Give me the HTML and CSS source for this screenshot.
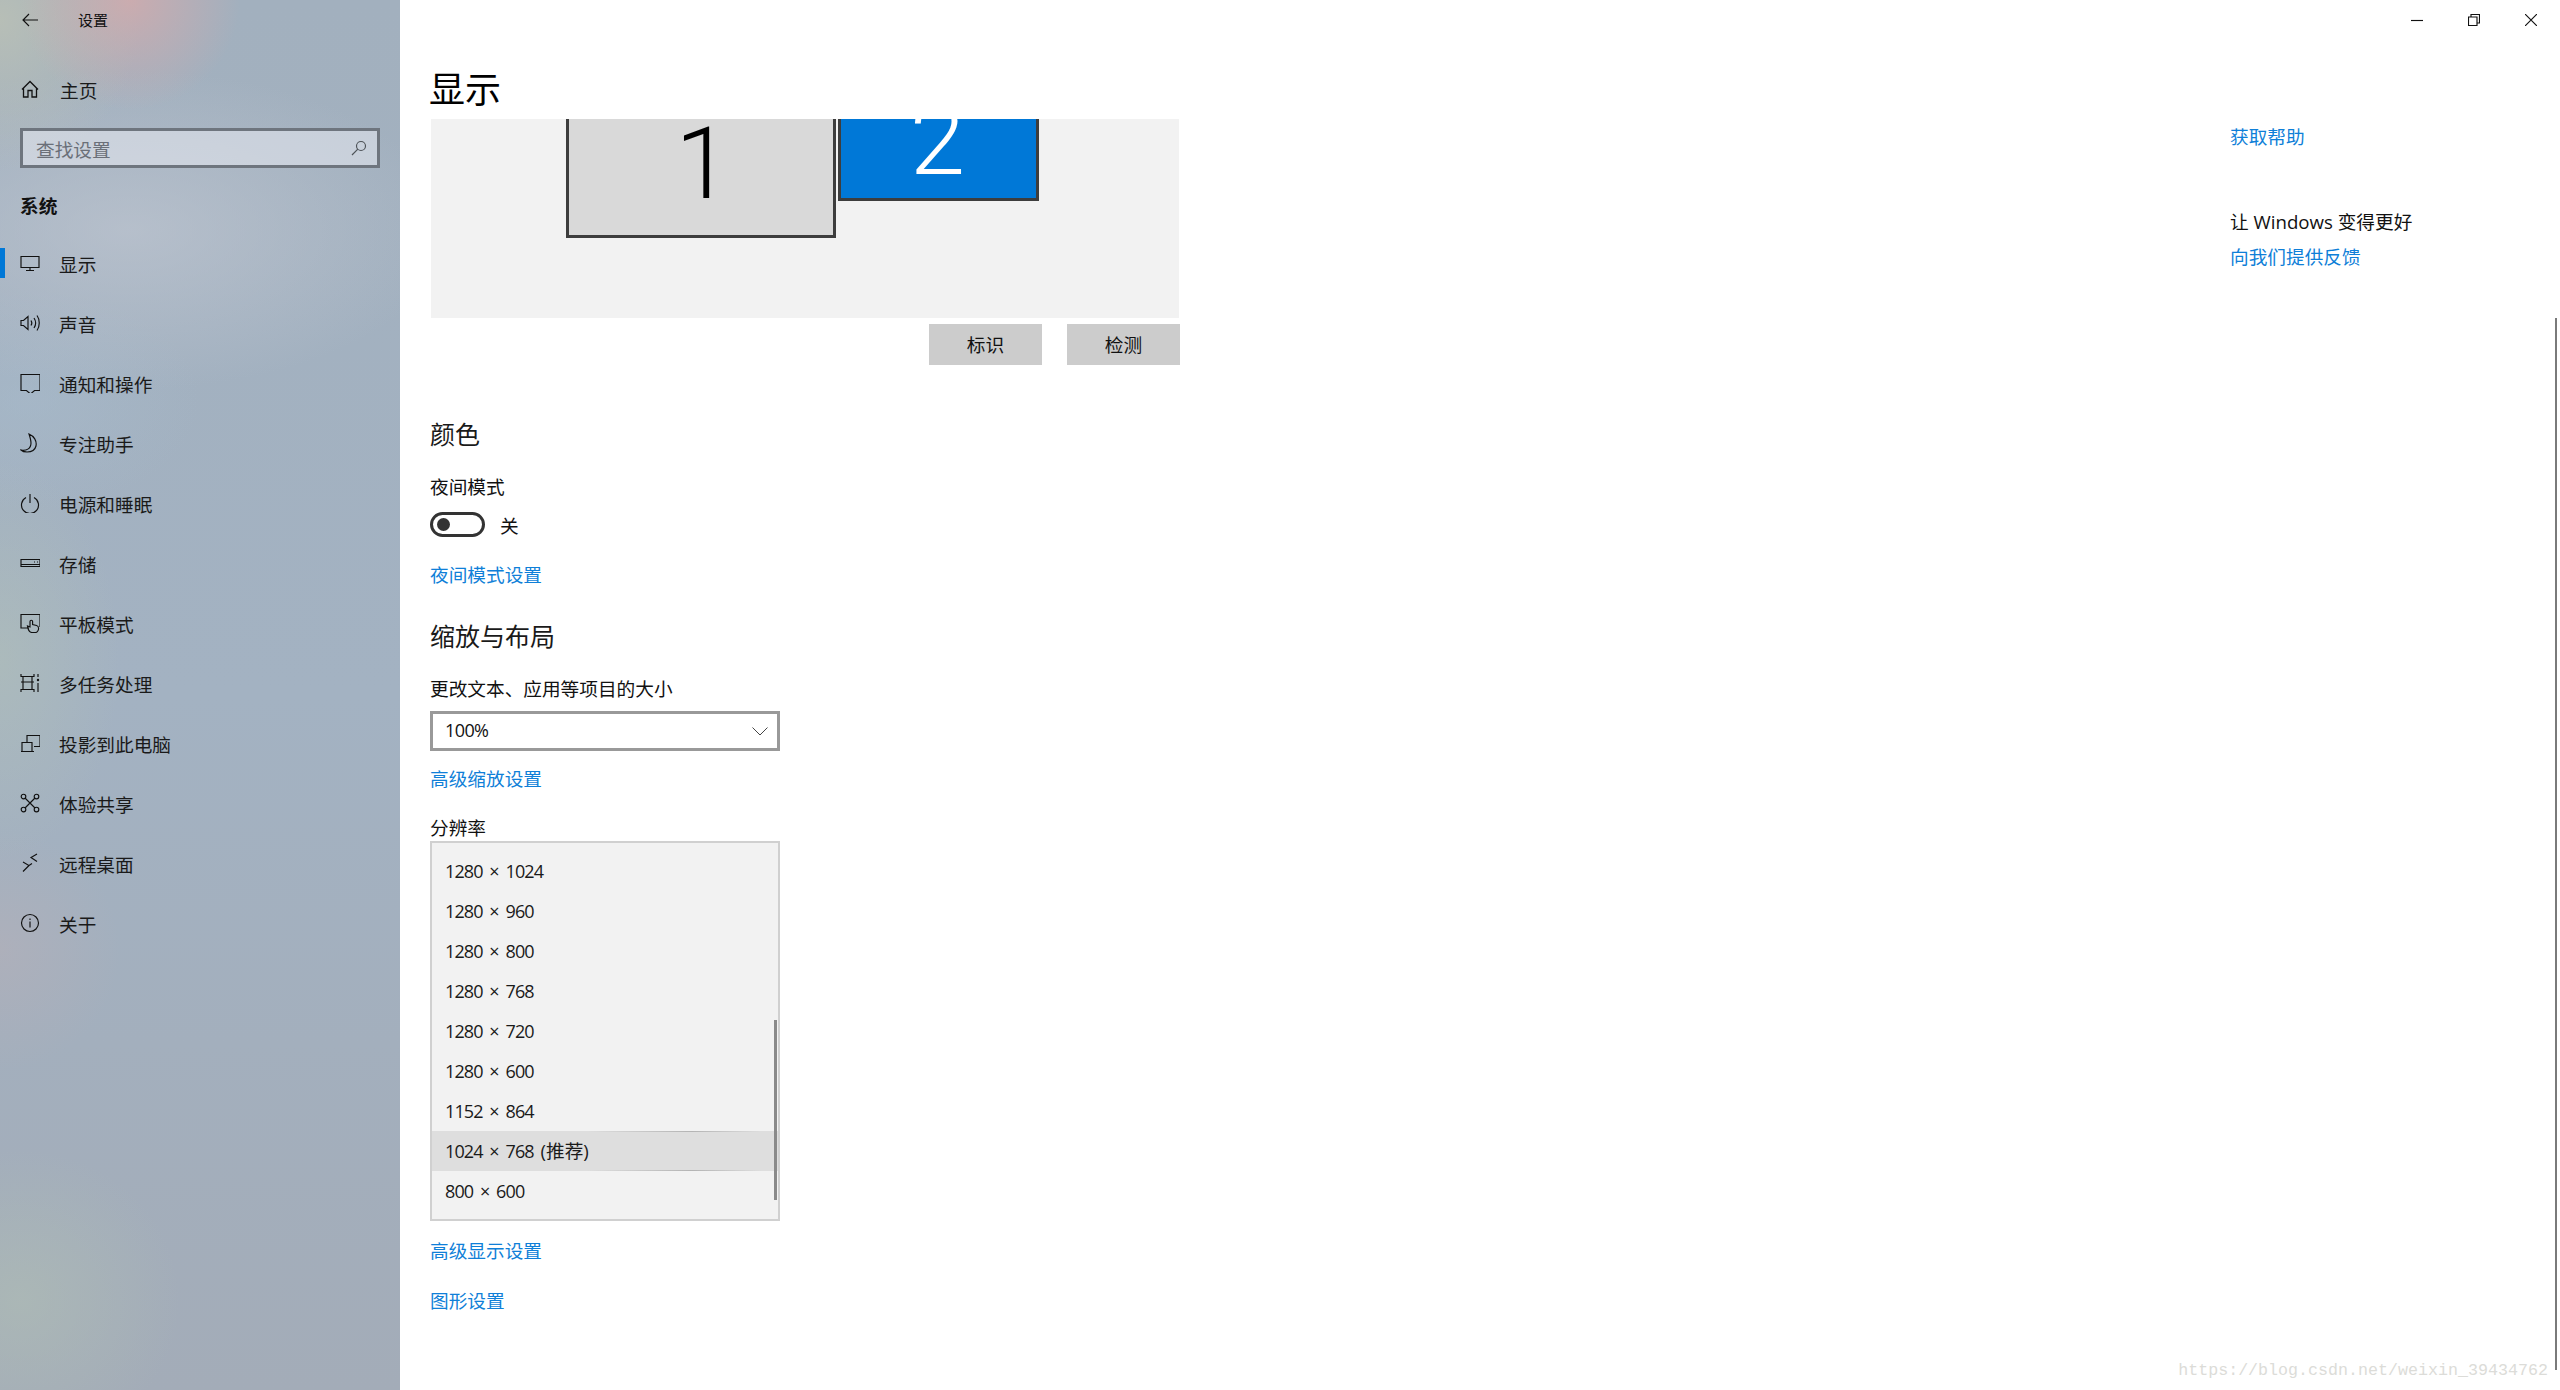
FILE: index.html
```html
<!DOCTYPE html>
<html lang="zh-CN">

<head>
    <meta charset="UTF-8">
    <title>设置</title>
    <link rel="stylesheet" href="styles.css">
</head>

<body>
    <div class="app">
        <aside class="sidebar">
            <div class="titlebar">
                <svg class="back-icon" width="16" height="14" viewBox="0 0 16 14"><path d="M7 1 1 7l6 6M1 7h15"/></svg>
                <span class="app-name">设置</span>
            </div>
            <a class="nav-home">
                <svg class="icon" width="20" height="20" viewBox="0 0 20 20"><path d="M2 10.5 10 2.5l8 8M3.5 9v9h4.500v-6.500h4V18h4.500V9"/></svg>
                <span>主页</span>
            </a>
            <div class="search">
                <span class="search-text">查找设置</span>
                <svg class="search-icon" width="16" height="16" viewBox="0 0 16 16"><circle cx="10" cy="6" r="4.500"/><path d="M6.800 9.200 1 15"/></svg>
            </div>
            <div class="nav-group">系统</div>
            <nav class="nav-list">
                <a class="nav-item active">
                    <svg class="icon" width="20" height="20" viewBox="0 0 20 20"><path d="M1 3.500h18v11H1zM10 14.500v3M6 17.500h8"/></svg>
                    <span>显示</span>
                </a>
                <a class="nav-item">
                    <svg class="icon" width="20" height="20" viewBox="0 0 20 20"><path d="M1 7.500h2.500L8 3.500v13l-4.500-4H1zM11 7.500c1 1.500 1 3.500 0 5M14 5c2 3 2 7 0 10M17 2.500c3 4 3 11 0 15"/></svg>
                    <span>声音</span>
                </a>
                <a class="nav-item">
                    <svg class="icon" width="20" height="20" viewBox="0 0 20 20"><path d="M1 1.500h19v16h-5.500l-4 3.500-4-3.500H1z"/></svg>
                    <span>通知和操作</span>
                </a>
                <a class="nav-item">
                    <svg class="icon" width="20" height="20" viewBox="0 0 20 20"><path d="M9 1c5 2 8 7 7 12-1 4-5 6-9 6-2.500 0-5-1-6-2 5 1 10-1 10-7 0-3-1-6-2-9z"/></svg>
                    <span>专注助手</span>
                </a>
                <a class="nav-item">
                    <svg class="icon" width="20" height="20" viewBox="0 0 20 20"><path d="M6 4.500a8.500 8.500 0 1 0 8 0M10 1v9"/></svg>
                    <span>电源和睡眠</span>
                </a>
                <a class="nav-item">
                    <svg class="icon" width="20" height="20" viewBox="0 0 20 20"><path d="M1 6.500h19v7H1zM1 11.500h19M14 9h1M17 9h1"/></svg>
                    <span>存储</span>
                </a>
                <a class="nav-item">
                    <svg class="icon" width="20" height="20" viewBox="0 0 20 20"><path d="M9 15H1V1.500h19V14M12 19.500c-2 0-3-1-4-4l-.5-2.500 2.500 1V8.500a1.300 1.300 0 0 1 2.600 0v3l4 1c2 .5 2 2 2 3 0 2-1.500 4-3 4z"/></svg>
                    <span>平板模式</span>
                </a>
                <a class="nav-item">
                    <svg class="icon" width="20" height="20" viewBox="0 0 20 20"><path d="M1 1v2.500h13V1M3 3.500v13M12 3.500v13M1 19v-2.500h13V19M1 9h13M18 1v3M18 10v9"/><circle class="dot" cx="18" cy="7" r="1.200"/></svg>
                    <span>多任务处理</span>
                </a>
                <a class="nav-item">
                    <svg class="icon" width="20" height="20" viewBox="0 0 20 20"><path d="M7 9V2.500h13v11h-6M1 18.500h13M2 18V9.500h10V18"/></svg>
                    <span>投影到此电脑</span>
                </a>
                <a class="nav-item">
                    <svg class="icon" width="20" height="20" viewBox="0 0 20 20"><circle cx="3.500" cy="3.500" r="2.300"/><circle cx="16.500" cy="3.500" r="2.300"/><circle cx="3.500" cy="16.500" r="2.300"/><circle cx="16.500" cy="16.500" r="2.300"/><path d="M5 5l10 10M15 5 5 15"/></svg>
                    <span>体验共享</span>
                </a>
                <a class="nav-item">
                    <svg class="icon" width="20" height="20" viewBox="0 0 20 20"><path d="M3 9l6 3.500-6 6M17 1l-6 3.500 6 4M9 12.500l3-2"/></svg>
                    <span>远程桌面</span>
                </a>
                <a class="nav-item">
                    <svg class="icon" width="20" height="20" viewBox="0 0 20 20"><circle cx="10" cy="10" r="8.500"/><path d="M10 8.500v6M10 5.500v1.500"/></svg>
                    <span>关于</span>
                </a>
            </nav>
        </aside>

        <main class="content">
            <div class="window-controls">
                <svg width="12" height="12" viewBox="0 0 12 12"><path d="M0 6.500h12"/></svg>
                <svg width="12" height="12" viewBox="0 0 12 12"><path d="M.5 3h8.500v8.500H.5zM3 3V.5h8.500V9H9"/></svg>
                <svg width="12" height="12" viewBox="0 0 12 12"><path d="m0 0 12 12M12 0 0 12"/></svg>
            </div>
            <div class="columns">
                <section class="settings">
                    <h1 class="page-title">显示</h1>

                    <div class="monitors">
                        <div class="monitor-row">
                            <div class="monitor monitor-one"><span>1</span></div>
                            <div class="monitor monitor-two"><span>2</span></div>
                        </div>
                    </div>
                    <div class="monitor-actions">
                        <button class="btn">标识</button>
                        <button class="btn">检测</button>
                    </div>

                    <h2 class="section-title title-color">颜色</h2>
                    <div class="label label-night">夜间模式</div>
                    <div class="toggle-row">
                        <span class="toggle"></span>
                        <span>关</span>
                    </div>
                    <a class="link link-night">夜间模式设置</a>

                    <h2 class="section-title title-scale">缩放与布局</h2>
                    <div class="label label-size">更改文本、应用等项目的大小</div>
                    <div class="select">
                        <span class="select-value">100%</span>
                        <svg width="16" height="9" viewBox="0 0 16 9"><path d="m.5.500 7.500 7.500L15.500.500"/></svg>
                    </div>
                    <a class="link link-scale">高级缩放设置</a>

                    <div class="label label-res">分辨率</div>
                    <div class="res-list">
                        <div class="res-item">1280 × 1024</div>
                        <div class="res-item">1280 × 960</div>
                        <div class="res-item">1280 × 800</div>
                        <div class="res-item">1280 × 768</div>
                        <div class="res-item">1280 × 720</div>
                        <div class="res-item">1280 × 600</div>
                        <div class="res-item">1152 × 864</div>
                        <div class="res-item selected"><span class="res-text">1024 × 768 <span class="res-note">(推荐)</span></span></div>
                        <div class="res-item">800 × 600</div>
                        <span class="res-scroll"></span>
                    </div>
                    <a class="link link-display">高级显示设置</a>
                    <a class="link link-graphics">图形设置</a>
                </section>

                <section class="help">
                    <a class="link">获取帮助</a>
                    <div class="help-title">让 Windows 变得更好</div>
                    <a class="link">向我们提供反馈</a>
                </section>
            </div>
            <span class="page-scroll"></span>
            <span class="watermark">https://blog.csdn.net/weixin_39434762</span>
        </main>
    </div>
</body>

</html>
```

FILE: styles.css
```css
* {
    margin: 0;
    padding: 0;
    box-sizing: border-box;
}

html,
body {
    height: 100%;
    overflow: hidden;
}

body {
    font-family: "Open Sans", "Noto Sans CJK SC", sans-serif;
    font-size: 18.67px;
    color: #111;
    background-color: #fff;
}

.app {
    display: flex;
    height: 1390px;
}

/* sidebar */

.sidebar {
    width: 400px;
    flex-shrink: 0;
    background-image:
        radial-gradient(circle 110px at 130px 0, rgba(216, 170, 170, 0.75), rgba(216, 170, 170, 0)),
        radial-gradient(ellipse 140px 150px at 0 20px, rgba(190, 195, 180, 0.75), rgba(190, 195, 180, 0)),
        radial-gradient(ellipse 320px 160px at 130px 230px, rgba(190, 197, 208, 0.7), rgba(190, 197, 208, 0)),
        radial-gradient(ellipse 170px 110px at 30px 400px, rgba(168, 188, 205, 0.5), rgba(168, 188, 205, 0)),
        radial-gradient(ellipse 120px 200px at 0 660px, rgba(182, 196, 180, 0.45), rgba(182, 196, 180, 0)),
        radial-gradient(ellipse 120px 120px at 0 950px, rgba(186, 176, 182, 0.45), rgba(186, 176, 182, 0)),
        radial-gradient(ellipse 160px 150px at 20px 1300px, rgba(176, 190, 180, 0.6), rgba(176, 190, 180, 0)),
        linear-gradient(180deg, #a2b0be, #a3b2c2 50%, #a3acb8);
}

.sidebar a {
    color: #1a1a1a;
}

.sidebar svg,
.window-controls svg {
    fill: none;
    stroke: #111;
    stroke-width: 1.15;
    flex-shrink: 0;
}

.select svg {
    fill: none;
    stroke: #444;
    stroke-width: 1;
    flex-shrink: 0;
}

.sidebar svg .dot {
    fill: #111;
    stroke: none;
}

.titlebar {
    display: flex;
    align-items: center;
    height: 40px;
    padding-left: 22px;
}

.app-name {
    font-size: 15px;
    margin-left: 40px;
    padding-bottom: 2px;
}

.nav-home {
    display: flex;
    align-items: center;
    gap: 20px;
    height: 24px;
    margin-top: 37px;
    padding-left: 20px;
}

.nav-home .icon {
    stroke-width: 1.3;
}

.search {
    display: flex;
    align-items: center;
    justify-content: space-between;
    width: 360px;
    height: 40px;
    margin: 27px 0 0 20px;
    padding: 0 10px 0 13px;
    border: 3px solid #6e757e;
    background-color: rgba(225, 229, 236, 0.6);
}

.search-text {
    color: #6a6f78;
}

.search-icon {
    stroke: #4d5257 !important;
}

.nav-group {
    font-weight: 700;
    margin: 25px 0 0 20px;
    height: 26px;
    line-height: 26px;
}

.nav-list {
    display: flex;
    flex-direction: column;
    margin-top: 14px;
}

.nav-item {
    display: flex;
    align-items: center;
    gap: 19px;
    height: 60px;
    padding-left: 20px;
    position: relative;
}

.nav-item.active::before {
    content: "";
    position: absolute;
    left: 0;
    top: 15px;
    width: 5px;
    height: 30px;
    background-color: #0078d7;
}

/* main area */

.content {
    flex: 1;
    position: relative;
    padding-left: 30px;
}

.window-controls {
    display: flex;
    justify-content: flex-end;
    gap: 45px;
    height: 40px;
    padding: 14px 23px 0 0;
}

.columns {
    display: flex;
    justify-content: space-between;
}

.settings {
    display: flex;
    flex-direction: column;
    align-items: flex-start;
    width: 750px;
}

.page-title {
    font-size: 36px;
    font-weight: 400;
    line-height: 50px;
    margin-top: 25px;
    height: 54px;
    margin-left: -1px;
    color: #000;
}

.monitors {
    width: 748px;
    height: 199px;
    margin-left: 1px;
    background-color: #f2f2f2;
    overflow: hidden;
}

.monitor-row {
    display: flex;
    gap: 2px;
    align-items: flex-start;
    margin-left: 135px;
}

.monitor {
    display: flex;
    justify-content: center;
    align-items: flex-end;
    border: 3px solid #3d3d3d;
    border-top: 0;
    font-family: "Roboto", sans-serif;
    font-weight: 300;
    font-size: 100px;
    line-height: 0.8;
}

.monitor-one {
    width: 270px;
    height: 119px;
    padding: 0 0 31px 4px;
    background-color: #d9d9d9;
    color: #000;
}

.monitor-two {
    width: 201px;
    height: 82px;
    padding: 0 2px 18px 0;
    background-color: #0078d7;
    color: #fff;
}

.monitor-actions {
    display: flex;
    justify-content: flex-end;
    gap: 25px;
    width: 750px;
    margin-top: 6px;
}

.btn {
    width: 113px;
    height: 41px;
    padding-bottom: 2px;
    border: 0;
    background-color: #ccc;
    font: inherit;
    color: #111;
}

.section-title {
    font-size: 25px;
    font-weight: 400;
    line-height: 34px;
    color: #1a1a1a;
}

.title-color {
    margin-top: 52px;
}

.title-scale {
    margin-top: 31px;
}

.label {
    line-height: 26px;
}

.label-night {
    margin-top: 23px;
}

.label-size {
    margin-top: 23px;
}

.label-res {
    margin-top: 23px;
}

.toggle-row {
    display: flex;
    align-items: center;
    gap: 15px;
    height: 25px;
    margin-top: 12px;
}

.toggle {
    position: relative;
    width: 55px;
    height: 25px;
    border: 3px solid #333;
    border-radius: 13px;
}

.toggle::after {
    content: "";
    position: absolute;
    left: 4px;
    top: 3px;
    width: 13px;
    height: 13px;
    border-radius: 50%;
    background-color: #333;
}

.link {
    display: block;
    color: #0f7fd8;
    line-height: 26px;
}

.link-night {
    margin-top: 25px;
}

.link-scale {
    margin-top: 15px;
}

.link-display {
    margin-top: 17px;
}

.link-graphics {
    margin-top: 24px;
}

.select {
    display: flex;
    align-items: center;
    justify-content: space-between;
    width: 350px;
    height: 40px;
    margin-top: 9px;
    padding: 0 9px 0 12px;
    border: 3px solid #999;
}

.select-value {
    font-size: 18px;
    letter-spacing: -0.6px;
    padding-bottom: 2px;
}

.res-list {
    position: relative;
    width: 350px;
    height: 380px;
    padding-top: 8px;
    background-color: #f2f2f2;
    border: 2px solid #d0d0d0;
}

.res-item {
    display: flex;
    align-items: center;
    height: 40px;
    padding-left: 13px;
    font-size: 18px;
    letter-spacing: -0.9px;
    word-spacing: 3px;
    color: #1a1a1a;
}

.res-text {
    padding-bottom: 3px;
}

.res-note {
    font-size: 18.67px;
    letter-spacing: 0;
}

.res-item.selected {
    background-color: #dedede;
    border-top: 1px solid transparent;
    border-bottom: 1px solid transparent;
    border-image: linear-gradient(90deg, #dedede 45%, #b4b4b4 75%, #dedede 95%) 1;
}

.res-scroll {
    position: absolute;
    right: 1px;
    top: 177px;
    width: 3px;
    height: 180px;
    background-color: #8a8a8a;
}

.help {
    width: 330px;
}

.help .link:first-child {
    margin-top: 84px;
}

.help-title {
    margin-top: 59px;
    line-height: 26px;
}

.help-title + .link {
    margin-top: 9px;
}

.page-scroll {
    position: absolute;
    right: 3px;
    top: 318px;
    width: 2px;
    height: 1052px;
    background-color: #7a7a7a;
}

.watermark {
    position: absolute;
    right: 12px;
    bottom: 10px;
    font-family: "Liberation Mono", monospace;
    font-size: 16.67px;
    color: #dcdcd8;
}
```
